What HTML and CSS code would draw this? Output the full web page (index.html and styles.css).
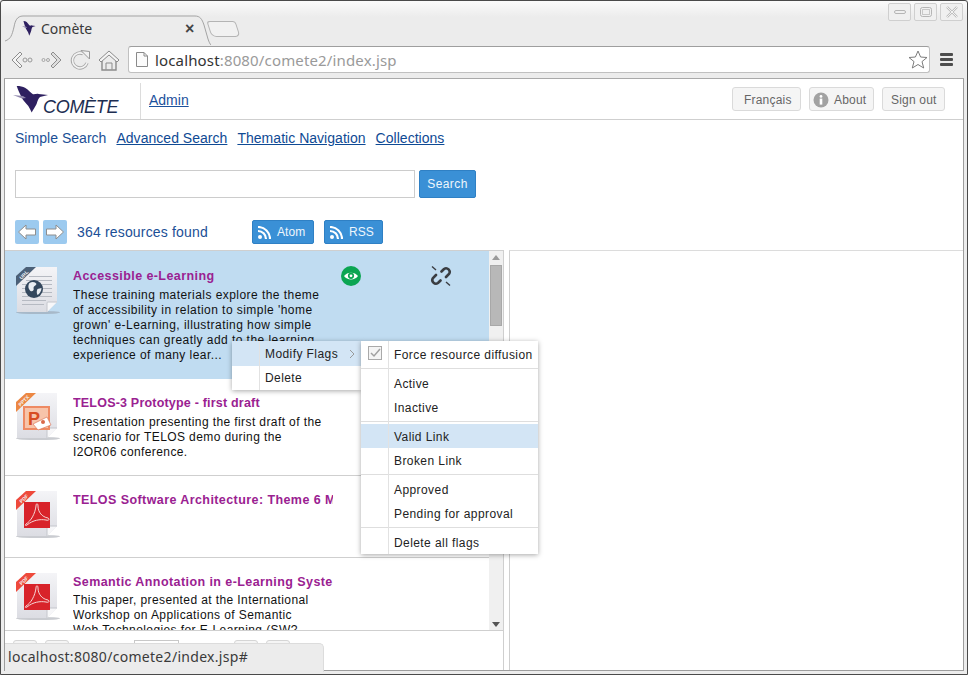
FILE: index.html
```html
<!DOCTYPE html>
<html lang="en">
<head>
<meta charset="utf-8">
<title>Comète</title>
<link rel="stylesheet" href="styles.css">
</head>
<body>
<svg class="defs" width="0" height="0" aria-hidden="true">
  <defs>
    <symbol id="bird" viewBox="0 0 36 27" preserveAspectRatio="none">
      <path fill="#2e2060" d="M3.7 0 C7 0 10 0.5 12 1.7 C15 3.5 18 7 20 8.3 C22 8.5 24 7.5 25.5 8 L35 9 L27 11 C25 13 24.5 15 23.6 18 C22 21 20 24 18.7 26.5 C17.5 24 16.5 22 15.3 20 C13 17 10.5 15 8.7 11.7 C7 8 5 4 3.7 0 Z"/>
      <path fill="#9088ad" d="M0 9 L10 10 L13 12 L9 12.5 Z"/>
    </symbol>
    <linearGradient id="pageg" x1="0" y1="0" x2="0" y2="1">
      <stop offset="0" stop-color="#f4f4f7"/>
      <stop offset="1" stop-color="#dcdde3"/>
    </linearGradient>
    <symbol id="sheet" viewBox="0 0 46 48">
      <ellipse cx="22" cy="45.5" rx="22" ry="1.6" fill="#8a8f98" opacity=".45"/>
      <path fill="url(#pageg)" d="M10 0 H41 V35 L31 45 H1 V9 Z"/>
      <path fill="#f7f7f9" d="M31 45 V36 Q31 35 32 35 H41 Z"/>
      <path fill="none" stroke="#c4c6cc" d="M31 45 V36 Q31 35 32 35 H41"/>
    </symbol>
    <symbol id="pdfart" viewBox="0 0 46 48">
      <use href="#sheet"/>
      <rect x="8" y="11" width="26" height="26" fill="#d8232a"/>
      <path fill="none" stroke="#f6d6d6" stroke-width="1" d="M10 33 C15 30 19 23 20 15 C20 12 22 12 22 15 C22 21 26 26 32 27 C34 28 33 30 30 29 C24 28 17 29 11 34 C9 35 9 34 10 33 Z"/>
      <path fill="#ee4a3c" d="M0 19 V9 L10 0 H20 Z"/>
      <text x="8" y="9.5" class="ribbon" transform="rotate(-45 8 8)">PDF</text>
    </symbol>
  </defs>
</svg>
<div class="window">
  <div class="tabstrip">
    <div class="tab">
      <svg class="tab-shape" width="206" height="31" viewBox="0 0 206 31" aria-hidden="true">
        <path fill="#ececec" stroke="#a3a3a3" d="M0 26 C6 24 7 20 9 12 C10 6 12 1 18 1 H190 C195 1 197 4 199 10 L203 24 C204 27 205 29 206 30"/>
      </svg>
      <svg class="fav" width="14" height="15" aria-hidden="true"><use href="#bird"/></svg>
      <span class="tab-title">Comète</span>
      <span class="tab-close">×</span>
    </div>
    <div class="newtab"></div>
    <div class="winbtns">
      <div class="winbtn"><svg width="12" height="6" aria-hidden="true"><rect x=".5" y="1.5" width="11" height="3" rx="1.5" fill="none" stroke="#b5b5b5"/></svg></div>
      <div class="winbtn"><svg width="12" height="12" aria-hidden="true"><rect x=".5" y="1.5" width="11" height="9" rx="2" fill="none" stroke="#b5b5b5"/><rect x="2.5" y="3.5" width="7" height="5" fill="none" stroke="#c8c8c8"/></svg></div>
      <div class="winbtn"><svg width="12" height="12" aria-hidden="true"><path d="M1 1 L11 11 M11 1 L1 11" stroke="#bcbcbc" stroke-width="2.4" fill="none"/><path d="M1 1 L11 11 M11 1 L1 11" stroke="#f2f2f2" stroke-width="1" fill="none"/></svg></div>
    </div>
  </div>
  <div class="toolbar">
    <svg class="tool" width="23" height="20" viewBox="0 0 23 20" aria-hidden="true"><path d="M10 2 L2 10 L10 18 L12 16 L6 10 L12 4 Z" fill="#f4f4f4" stroke="#8d8d8d"/><circle cx="15" cy="10" r="2" fill="none" stroke="#9a9a9a"/><circle cx="20" cy="10" r="2" fill="none" stroke="#9a9a9a"/></svg>
    <svg class="tool" width="22" height="20" viewBox="0 0 22 20" aria-hidden="true"><circle cx="2.5" cy="10" r="1.5" fill="none" stroke="#a5a5a5"/><circle cx="7" cy="10" r="1.5" fill="none" stroke="#a5a5a5"/><path d="M12 2 L20 10 L12 18 L10 16 L16 10 L10 4 Z" fill="#ddd" stroke="#8d8d8d"/></svg>
    <svg class="tool" width="21" height="21" viewBox="0 0 21 21" aria-hidden="true"><path d="M17 13 A7.5 7.5 0 1 1 13 3.6" fill="none" stroke="#a8a8a8" stroke-width="3.4"/><path d="M17 13 A7.5 7.5 0 1 1 13 3.6" fill="none" stroke="#f4f4f4" stroke-width="1.6"/><path d="M11 .5 L19.5 1.5 V9 Z" fill="#f2f2f2" stroke="#999"/></svg>
    <svg class="tool" width="22" height="21" viewBox="0 0 22 21" aria-hidden="true"><path d="M11 1 L21 10 L19 12 L11 5 L3 12 L1 10 Z" fill="#f4f4f4" stroke="#8b8b8b"/><path d="M4 11 V20 H18 V11" fill="none" stroke="#8b8b8b" stroke-width="1.4"/><path d="M8 19.5 V13 H14 V19.5" fill="none" stroke="#8b8b8b"/></svg>
    <div class="omnibox">
      <svg width="12" height="15" viewBox="0 0 12 15" aria-hidden="true"><path d="M.5 .5 H8 L11.5 4 V14.5 H.5 Z M8 .5 V4 H11.5" fill="#fbfbfb" stroke="#8a8a8a"/></svg>
      <span class="url"><span class="host">localhost</span>:8080/comete2/index.jsp</span>
      <svg class="star" width="20" height="19" viewBox="0 0 20 19" aria-hidden="true"><path d="M10 1 L12.6 7 L19 7.5 L14 11.6 L15.7 18 L10 14.5 L4.3 18 L6 11.6 L1 7.5 L7.4 7 Z" fill="#fff" stroke="#7c7c7c"/></svg>
    </div>
    <div class="hamburger"><i></i><i></i><i></i></div>
  </div>

  <div class="page">
    <header class="apphead">
      <div class="logo">
        <svg class="logo-bird" width="36" height="27" aria-hidden="true"><use href="#bird"/></svg>
        <span class="logo-text">COMÈTE</span>
      </div>
      <a class="admin" href="#">Admin</a>
      <div class="headbtns">
        <a class="gbtn lang" href="#">Français</a>
        <a class="gbtn about" href="#"><svg width="16" height="16" viewBox="0 0 16 16" aria-hidden="true"><circle cx="8" cy="8" r="7.5" fill="#a2a2a2"/><rect x="6.7" y="6.6" width="2.6" height="6" fill="#fff"/><circle cx="8" cy="4.4" r="1.4" fill="#fff"/></svg>About</a>
        <a class="gbtn" href="#">Sign out</a>
      </div>
    </header>
    <nav class="tabs">
      <span class="current">Simple Search</span>
      <a href="#">Advanced Search</a>
      <a href="#">Thematic Navigation</a>
      <a href="#">Collections</a>
    </nav>
    <form class="search">
      <input class="query" type="text" aria-label="Search">
      <button class="bbtn searchbtn" type="button">Search</button>
    </form>
    <div class="results-bar">
      <span class="arrow"><svg width="20" height="16" viewBox="0 0 20 16" aria-hidden="true"><path d="M9 1 L1.5 8 L9 15 V11 H18.5 V5 H9 Z" fill="#fff" stroke="#8e8e8e"/></svg></span>
      <span class="arrow"><svg width="20" height="16" viewBox="0 0 20 16" aria-hidden="true"><path d="M11 1 L18.5 8 L11 15 V11 H1.5 V5 H11 Z" fill="#fff" stroke="#8e8e8e"/></svg></span>
      <span class="count">364 resources found</span>
      <a class="bbtn feed atom" href="#"><svg class="rss" width="13" height="13" viewBox="0 0 13 13" aria-hidden="true"><circle cx="2" cy="11" r="2" fill="#fff"/><path d="M0 5 A8 8 0 0 1 8 13 M0 1 A12 12 0 0 1 12 13" fill="none" stroke="#fff" stroke-width="2.2"/></svg>Atom</a>
      <a class="bbtn feed" href="#"><svg class="rss" width="13" height="13" viewBox="0 0 13 13" aria-hidden="true"><circle cx="2" cy="11" r="2" fill="#fff"/><path d="M0 5 A8 8 0 0 1 8 13 M0 1 A12 12 0 0 1 12 13" fill="none" stroke="#fff" stroke-width="2.2"/></svg>RSS</a>
    </div>

    <div class="split">
      <section class="left">
        <div class="listwrap">
          <div class="list">
            <article class="row row1 selected">
              <svg class="doc" width="46" height="48" viewBox="0 0 46 48" aria-hidden="true">
                <use href="#sheet"/>
                <path stroke="#b6bac2" stroke-width="1" d="M13 9.5 H36 M10 13.5 H36 M6 17.5 H36 M6 21.5 H36 M6 25.5 H36 M6 29.5 H36 M6 33.5 H30 M6 37.5 H28"/>
                <circle cx="18" cy="22" r="9" fill="#33475d"/>
                <path fill="#e9edf2" transform="translate(-3.5 -1)" d="M17 17 C20 15 23 16 24 18 C23 20 21 20 21 22 C22 24 20 26 18 25 C16 23 15 20 17 17 Z M25 23 L29 22 C29 25 27 28 25 29 C24 27 24 25 25 23 Z"/>
                <path fill="#4b6078" d="M0 19 V9 L10 0 H20 Z"/>
                <text x="8" y="9.5" class="ribbon" transform="rotate(-45 8 8)">URL</text>
              </svg>
              <div class="body">
                <h3>Accessible e-Learning</h3>
                <p>These training materials explore the theme<br>of accessibility in relation to simple 'home<br>grown' e-Learning, illustrating how simple<br>techniques can greatly add to the learning<br>experience of many lear...</p>
              </div>
              <div class="flag eye"><svg width="20" height="20" viewBox="0 0 20 20" aria-hidden="true"><circle cx="10" cy="10" r="10" fill="#0ba552"/><path d="M3 10 C6 5.5 14 5.5 17 10 C14 14.5 6 14.5 3 10 Z" fill="#fff"/><circle cx="10" cy="9.8" r="3.1" fill="#0ba552"/><circle cx="10" cy="9.8" r="1.4" fill="#fff"/></svg></div>
              <div class="flag chain"><svg width="22" height="22" viewBox="0 0 22 22" aria-hidden="true"><g fill="none" stroke="#3a3d42" stroke-width="2.6" stroke-linecap="round"><path d="M11.5 6.5 L14 4 A3.6 3.6 0 0 1 19 9 L16 12"/><path d="M10.5 15.5 L8 18 A3.6 3.6 0 0 1 3 13 L6 10"/></g><path d="M2 1.5 L6 5 M20 20.5 L16 17" stroke="#3a3d42" stroke-width="1.4"/></svg></div>
            </article>
            <article class="row row2">
              <svg class="doc" width="46" height="48" viewBox="0 0 46 48" aria-hidden="true">
                <use href="#sheet"/>
                <rect x="7" y="13" width="27" height="24" fill="#ee8a63"/>
                <rect x="9" y="15" width="23" height="20" fill="#f7c4aa"/>
                <text x="12" y="32" class="ppt-p">P</text>
                <path d="M17 31 L31 24 L35 32 L22 37 Z" fill="#fff" stroke="#d9694a" stroke-width=".6"/>
                <circle cx="27" cy="29" r="2" fill="#d9694a"/>
                <path fill="#ec8743" d="M0 19 V9 L10 0 H20 Z"/>
                <text x="8" y="9.5" class="ribbon" transform="rotate(-45 8 8)">PPTX</text>
              </svg>
              <div class="body">
                <h3>TELOS-3 Prototype - first draft</h3>
                <p>Presentation presenting the first draft of the<br>scenario for TELOS demo during the<br>I2OR06 conference.</p>
              </div>
            </article>
            <article class="row row3">
              <svg class="doc" width="46" height="48" viewBox="0 0 46 48" aria-hidden="true"><use href="#pdfart"/></svg>
              <div class="body">
                <h3>TELOS Software Architecture: Theme 6 Meeting</h3>
              </div>
            </article>
            <article class="row row4">
              <svg class="doc" width="46" height="48" viewBox="0 0 46 48" aria-hidden="true"><use href="#pdfart"/></svg>
              <div class="body">
                <h3>Semantic Annotation in e-Learning Systems</h3>
                <p>This paper, presented at the International<br>Workshop on Applications of Semantic<br>Web Technologies for E-Learning (SW?</p>
              </div>
            </article>
          </div>
          <div class="scrollbar">
            <span class="sb-up"></span>
            <span class="sb-thumb"></span>
            <span class="sb-space"></span>
            <span class="sb-down"></span>
          </div>
        </div>
        <div class="pager">
          <span class="pg"></span><span class="pg"></span>
          <span class="pg-input"></span>
          <span class="pg"></span><span class="pg"></span>
        </div>
      </section>
      <section class="right"></section>
    </div>
  </div>

  <div class="menu main-menu">
    <div class="mi hover"><span>Modify Flags</span><svg class="sub" width="6" height="10" viewBox="0 0 6 10" aria-hidden="true"><path d="M1 1 L5 5 L1 9" fill="none" stroke="#9a9a9a"/></svg></div>
    <div class="mi"><span>Delete</span></div>
  </div>
  <div class="menu sub-menu">
    <div class="mi check"><svg class="tick" width="14" height="14" viewBox="0 0 14 14" aria-hidden="true"><rect x=".5" y=".5" width="13" height="13" fill="#f4f4f4" stroke="#a9a9a9"/><path d="M3 7 L6 10 L12 3" fill="none" stroke="#a0a0a0" stroke-width="1.5"/></svg><span>Force resource diffusion</span></div>
    <div class="sep first"></div>
    <div class="mi"><span>Active</span></div>
    <div class="mi"><span>Inactive</span></div>
    <div class="sep"></div>
    <div class="mi hover"><span>Valid Link</span></div>
    <div class="mi"><span>Broken Link</span></div>
    <div class="sep"></div>
    <div class="mi"><span>Approved</span></div>
    <div class="mi"><span>Pending for approval</span></div>
    <div class="sep"></div>
    <div class="mi"><span>Delete all flags</span></div>
  </div>
  <div class="status">localhost:8080/comete2/index.jsp#</div>
</div>
</body>
</html>
```
FILE: styles.css
```css
* { box-sizing: border-box; }
html, body { margin: 0; padding: 0; overflow: hidden; }
body { width: 968px; height: 675px; font-family: "Liberation Sans", Arial, sans-serif; background: #ececec; }
.defs { position: absolute; }
a { color: #0f4a94; }

.window {
  position: relative; width: 968px; height: 675px;
  display: flex; flex-direction: column; overflow: hidden;
  border: 1px solid #4a4a4a; border-radius: 3px 3px 0 0;
  background: linear-gradient(#fbfbfb 0, #ececec 16px);
}

/* browser chrome */
.tabstrip { height: 45px; flex: none; display: flex; align-items: flex-end; padding-left: 4px; position: relative; }
.tab { position: relative; width: 206px; height: 30px; display: flex; align-items: flex-start; padding: 5px 0 0 17px; }
.tab-shape { position: absolute; left: 0; top: -1px; }
.fav { position: relative; flex: none; }
.tab-title { position: relative; margin-left: 5px; font: 14px/16px "Noto Sans", sans-serif; letter-spacing: 0; color: #3a3a3a; }
.tab-close { position: absolute; left: 180px; top: 4px; font: bold 16px "Liberation Sans", sans-serif; color: #444; }
.newtab { width: 29px; height: 16px; margin: 0 0 9px -2px; border: 1px solid #b4b4b4; border-radius: 3px 3px 5px 5px; transform: skewX(18deg); background: #f1f1f1; flex: none; }
.winbtns { margin-left: auto; align-self: flex-start; margin-top: 2px; margin-right: 4px; display: flex; gap: 3px; }
.winbtn { width: 23px; height: 18px; border: 1px solid #cfcfcf; border-radius: 2px; display: flex; align-items: center; justify-content: center; background: #f0f0f0; }

.toolbar { height: 33px; flex: none; display: flex; align-items: flex-start; padding: 0 0 0 10px; border-bottom: 1px solid #a9a9a9; margin: 0 3px 0 3px; position: relative; }
.toolbar .tool { flex: none; margin-top: 4px; }
.toolbar .tool:nth-child(1) { margin-left: -4px; margin-right: 8px; }
.toolbar .tool:nth-child(2) { margin-right: 7px; }
.toolbar .tool:nth-child(3) { margin-right: 7px; }
.toolbar .tool:nth-child(4) { margin-right: 8px; }
.omnibox { width: 802px; height: 27px; flex: none; background: #fff; border: 1px solid #c0c0c0; border-top-color: #9e9e9e; border-radius: 3px; display: flex; align-items: center; padding: 0 1px 0 7px; }
.url { margin-left: 7px; font: 15px "Noto Sans", sans-serif; color: #9a9a9a; letter-spacing: .15px; white-space: nowrap; }
.host { color: #333; }
.star { margin-left: auto; }
.hamburger { margin: 7px 0 0 10px; width: 13px; display: flex; flex-direction: column; gap: 2px; }
.hamburger i { display: block; height: 3px; background: #4d4d4d; border-radius: 1px; }

/* page */
.page { flex: 1; min-height: 0; margin: 0 3px 3px 3px; background: #fff; border-left: 1px solid #9d9d9d; border-right: 1px solid #9d9d9d; border-bottom: 1px solid #9d9d9d; display: flex; flex-direction: column; }
.apphead { height: 41px; flex: none; display: flex; align-items: flex-start; border-bottom: 1px solid #cfcfcf; position: relative; }
.logo { position: relative; width: 136px; height: 36px; margin-top: 4px; border-right: 1px solid #dcdcdc; flex: none; }
.logo-bird { position: absolute; left: 8px; top: 3px; }
.logo-text { position: absolute; left: 38px; top: 14px; font: italic 18px "Liberation Sans", sans-serif; color: #1d2e52; letter-spacing: -.3px; }
.admin { margin: 13px 0 0 8px; font-size: 14px; color: #1b519c; }
.headbtns { margin: 8px 18px 0 auto; display: flex; gap: 8px; }
.gbtn { height: 24px; display: flex; align-items: center; gap: 5px; padding: 1px 8px 0; background: #f5f5f5; border: 1px solid #dadada; border-radius: 3px; font-size: 12px; letter-spacing: .2px; color: #666; text-decoration: none; width: 63px; white-space: nowrap; }
.gbtn.lang { padding: 1px 0 0 11px; width: 69px; }
.gbtn.about { padding: 1px 0 0 3px; width: 65px; }

.tabs { margin: 10px 0 0 10px; display: flex; gap: 10px; font-size: 14px; letter-spacing: .03px; line-height: 16px; color: #1b4f96; }
.tabs a { color: #0f4a94; }

.search { margin: 24px 0 0 10px; display: flex; gap: 4px; }
.query { width: 400px; height: 28px; border: 1px solid #ccc; background: #fff; padding: 0; }
.bbtn { background: #3a90d6; border: 1px solid #2f80c4; border-radius: 2px; color: #eef6fc; font: 12px "Liberation Sans", sans-serif; letter-spacing: .4px; text-decoration: none; }
.searchbtn { width: 57px; height: 28px; padding: 0; }

.results-bar { margin: 22px 0 0 10px; height: 24px; display: flex; align-items: center; }
.arrow { width: 24px; height: 24px; margin-right: 4px; background: #9ccaef; border-radius: 2px; display: flex; align-items: center; justify-content: center; }
.count { margin: 0 44px 0 6px; width: 131px; white-space: nowrap; font-size: 14px; letter-spacing: .17px; color: #1b4f96; }
.feed { width: 59px; height: 24px; display: flex; align-items: center; padding-left: 5px; margin-right: 10px; gap: 6px; letter-spacing: .1px; }
.feed.atom { width: 62px; }

.split { margin-top: 6px; flex: 1; min-height: 0; display: flex; }
.left { width: 499px; flex: none; border-top: 1px solid #cfcfcf; border-right: 1px solid #cfcfcf; display: flex; flex-direction: column; min-height: 0; }
.right { flex: 1; margin-left: 5px; border-top: 1px solid #dcdcdc; border-left: 1px solid #cfcfcf; }
.listwrap { height: 380px; flex: none; display: flex; border-bottom: 1px solid #cfcfcf; overflow: hidden; }
.list { width: 484px; flex: none; overflow: hidden; }
.row { position: relative; display: flex; align-items: flex-start; padding: 15px 0 0 11px; border-bottom: 1px solid #cfcfcf; overflow: hidden; }
.row1 { height: 128px; border-bottom: 0; padding-top: 16px; }
.row2 { height: 97px; }
.row2 .doc { margin-top: -1px; }
.row2 h3 { letter-spacing: .2px; }
.row3 { height: 82px; }
.row4 { height: 100px; border-bottom: 0; }
.selected { background: #c0dcf1; }
.doc { flex: none; }
.body { width: 260px; margin-left: 11px; overflow: hidden; flex: none; }
.row h3 { margin: 0; padding: 2px 0 0; font-size: 12.5px; line-height: 14px; font-weight: bold; color: #9a2191; white-space: nowrap; }
.row1 h3, .row3 h3, .row4 h3 { letter-spacing: .42px; }
.row p { margin: 5px 0 0; font-size: 12px; line-height: 15px; letter-spacing: .45px; color: #111; white-space: nowrap; }
.row2 p, .row4 p { letter-spacing: .4px; }
.row4 p { margin-top: 4px; }
.flag { position: absolute; top: 15px; }
.eye { left: 336px; }
.chain { left: 425px; top: 14px; }
.ribbon { font: bold 5px "Liberation Sans", sans-serif; fill: #f2f4f7; text-anchor: middle; }
.ppt-p { font: bold 18px "Liberation Sans", sans-serif; fill: #d84b20; }

.scrollbar { flex: 1; background: #f0f0f0; display: flex; flex-direction: column; align-items: center; padding: 4px 0 3px; }
.sb-up { width: 0; height: 0; border: 4px solid transparent; border-top: 0; border-bottom: 5px solid #9a9a9a; }
.sb-thumb { width: 12px; height: 61px; margin-top: 5px; background: #b8b8b8; border: 1px solid #a8a8a8; }
.sb-space { flex: 1; }
.sb-down { width: 0; height: 0; border: 4px solid transparent; border-bottom: 0; border-top: 5px solid #555; }

.pager { flex: 1; display: flex; align-items: flex-start; padding: 9px 0 0 8px; }
.pg { width: 24px; height: 24px; border: 1px solid #d5d5d5; border-radius: 3px; margin-right: 8px; background: #f5f5f5; flex: none; }
.pg-input { width: 45px; height: 24px; border: 1px solid #c8c8c8; margin: 0 55px 0 57px; flex: none; }

/* overlays */
.menu { position: absolute; background: #fff; box-shadow: 0 1px 5px rgba(0,0,0,.35); font-size: 12px; letter-spacing: .42px; color: #222; }
.menu::before { content: ""; position: absolute; top: 0; bottom: 0; width: 1px; background: #e2e2e2; z-index: 1; }
.main-menu { left: 231px; top: 340px; width: 129px; height: 49px; }
.main-menu::before { left: 27px; }
.sub-menu { left: 360px; top: 340px; width: 177px; height: 213px; }
.sub-menu::before { left: 27px; }
.mi { position: relative; height: 24px; display: flex; align-items: center; padding-left: 33px; }
.sub-menu .mi { padding-top: 2px; }
.mi.hover { background: #d3e5f5; }
.main-menu .mi:first-child { height: 25px; }
.mi .sub { position: absolute; right: 6px; top: 8px; }
.mi.check { height: 26px; }
.tick { position: absolute; left: 7px; top: 5px; }
.sep { position: relative; height: 1px; margin: 2px 0; background: #dedede; }
.sep.first { margin: 1px 0 2px; }
.status { position: absolute; left: 4px; top: 642px; width: 319px; height: 29px; padding: 3px 0 0 3px; background: #ececec; border: 1px solid #dcdcdc; border-left: 0; border-bottom: 0; border-radius: 0 5px 0 0; font: 14px "Noto Sans", sans-serif; letter-spacing: .3px; color: #3a3a3a; white-space: nowrap; }
```
